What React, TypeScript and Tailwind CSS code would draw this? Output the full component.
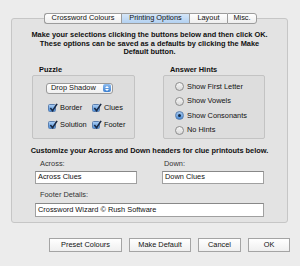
import React from 'react';

function Check({ label, className = '' }: { label: string; className?: string }) {
  return (
    <div className={`flex items-center gap-[4px] ${className}`}>
      <span className="relative w-[8px] h-[8px] rounded-[1.5px] border border-[#5b7fb0] bg-gradient-to-b from-[#a9ccf2] to-[#4c8fd9] shrink-0">
        <svg viewBox="0 0 10 10" className="absolute left-[0px] top-[-2px] w-[9px] h-[9px]">
          <path d="M1.5 5.5 L4 8.5 L9 1" fill="none" stroke="#1a2a45" strokeWidth="1.8" />
        </svg>
      </span>
      <span>{label}</span>
    </div>
  );
}

function Radio({ label, on = false }: { label: string; on?: boolean }) {
  return (
    <div className="flex items-center gap-[3px] h-[14.5px]">
      {on ? (
        <span className="w-[9px] h-[9px] rounded-full border border-[#5a7fae] bg-gradient-to-b from-[#a8cbf0] to-[#4a8cd6] flex items-center justify-center shrink-0">
          <span className="w-[3px] h-[3px] rounded-full bg-[#172a44]" />
        </span>
      ) : (
        <span className="w-[9px] h-[9px] rounded-full border border-[#8d8d8d] bg-gradient-to-b from-[#f6f6f6] to-[#d8d8d8] shrink-0" />
      )}
      <span>{label}</span>
    </div>
  );
}

function Tab({ label, active = false, w }: { label: string; active?: boolean; w: string }) {
  return (
    <div
      className={`${w} h-[11px] flex items-center justify-center border-y border-l border-[#9c9c9c] last:border-r last:rounded-r-[3px] first:rounded-l-[3px] ${
        active ? 'bg-gradient-to-b from-[#d5e6f8] to-[#b3d1f1]' : 'bg-gradient-to-b from-[#ffffff] to-[#eeeeee]'
      }`}
    >
      {label}
    </div>
  );
}

function Button({ label, w }: { label: string; w: string }) {
  return (
    <div className={`${w} h-[14px] flex items-center justify-center border border-[#a4a4a4] bg-gradient-to-b from-[#ffffff] to-[#efefef]`}>
      {label}
    </div>
  );
}

export default function App() {
  return (
    <div
      className="w-[300px] h-[266px] bg-[#ececec] text-[7.4px] leading-[8.5px] text-[#111] pt-[13px] overflow-hidden"
      style={{ fontFamily: '"Liberation Sans", Arial, sans-serif' }}
    >
      {/* Tabs */}
      <div className="relative z-10 flex ml-[44px] h-[11px]">
        <Tab label="Crossword Colours" w="w-[77px]" />
        <Tab label="Printing Options" active w="w-[68px]" />
        <Tab label="Layout" w="w-[38px]" />
        <Tab label="Misc." w="w-[30px]" />
      </div>

      {/* Panel */}
      <div className="mt-[-6px] ml-[11px] w-[277px] h-[205px] border border-[#c6c6c6] rounded-[3px] bg-[#e3e3e3] pt-[12px]">
        <p className="text-center font-bold">
          Make your selections clicking the buttons below and then click OK.
          <br />
          These options can be saved as a defaults by clicking the Make
          <br />
          Default button.
        </p>

        <div className="flex mt-[9px] ml-[20px] gap-[28px]">
          {/* Puzzle */}
          <div className="w-[103px]">
            <div className="font-bold ml-[7px] h-[9px]">Puzzle</div>
            <div className="mt-[0px] h-[64px] border border-[#c3c3c3] rounded-[2px] bg-[#dddddd] pt-[7px] pl-[13px]">
              <div className="w-[67px] h-[11px] flex items-center justify-between border border-[#9a9a9a] rounded-[3px] bg-gradient-to-b from-[#ffffff] to-[#f0f0f0] pl-[4px] pr-[1px]">
                <span>Drop Shadow</span>
                <span className="w-[8px] h-[8px] rounded-[2px] bg-gradient-to-b from-[#8fbdf0] to-[#3a7fd0] flex flex-col items-center justify-center gap-[1px]">
                  <svg viewBox="0 0 6 3" className="w-[4px] h-[2px]"><path d="M0 3 L3 0 L6 3Z" fill="#fff" /></svg>
                  <svg viewBox="0 0 6 3" className="w-[4px] h-[2px]"><path d="M0 0 L3 3 L6 0Z" fill="#fff" /></svg>
                </span>
              </div>
              <div className="mt-[10px] grid grid-cols-[44px_40px] gap-y-[9px] ml-[2px]">
                <Check label="Border" />
                <Check label="Clues" />
                <Check label="Solution" />
                <Check label="Footer" />
              </div>
            </div>
          </div>

          {/* Answer Hints */}
          <div className="w-[102px]">
            <div className="font-bold ml-[7px] h-[9px]">Answer Hints</div>
            <div className="mt-[0px] h-[64px] border border-[#c3c3c3] rounded-[2px] bg-[#dddddd] pt-[4px] pl-[11px]">
              <Radio label="Show First Letter" />
              <Radio label="Show Vowels" />
              <Radio label="Show Consonants" on />
              <Radio label="No Hints" />
            </div>
          </div>
        </div>

        <p className="text-center font-bold mt-[8px]">
          Customize your Across and Down headers for clue printouts below.
        </p>

        <div className="flex ml-[23px] gap-[25px] mt-[5px]">
          <div className="w-[102px]">
            <div className="ml-[5px] text-[#333]">Across:</div>
            <div className="mt-[2px] h-[13px] border border-[#a0a0a0] border-t-[#888] bg-white flex items-center pl-[2px]">Across Clues</div>
          </div>
          <div className="w-[102px]">
            <div className="ml-[2px] text-[#333]">Down:</div>
            <div className="mt-[2px] h-[13px] border border-[#a0a0a0] border-t-[#888] bg-white flex items-center pl-[2px]">Down Clues</div>
          </div>
        </div>

        <div className="ml-[23px] mt-[7px] w-[229px]">
          <div className="ml-[5px] text-[#333]">Footer Details:</div>
          <div className="mt-[4px] h-[14px] border border-[#a0a0a0] border-t-[#888] bg-white flex items-center pl-[2px]">
            Crossword Wizard © Rush Software
          </div>
        </div>
      </div>

      {/* Buttons */}
      <div className="flex mt-[15px] ml-[49px] gap-[7px]">
        <Button label="Preset Colours" w="w-[73px]" />
        <Button label="Make Default" w="w-[62px]" />
        <Button label="Cancel" w="w-[43px]" />
        <Button label="OK" w="w-[42px]" />
      </div>
    </div>
  );
}
